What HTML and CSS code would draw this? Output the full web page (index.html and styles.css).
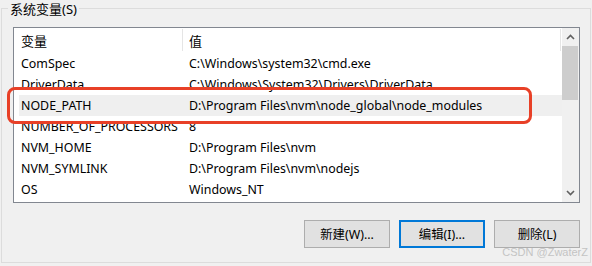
FILE: index.html
```html
<!DOCTYPE html>
<html lang="zh-CN">
<head>
<meta charset="utf-8">
<link rel="stylesheet" href="styles.css">
</head>
<body>
<div class="group">
  <div class="legend">系统变量(S)</div>
  <div class="listbox">
    <div class="list">
      <div class="head">
        <div class="hcell c1">变量</div>
        <div class="hcell c2">值</div>
      </div>
      <div class="row"><div class="cell c1">ComSpec</div><div class="cell c2">C:\Windows\system32\cmd.exe</div></div>
      <div class="row"><div class="cell c1">DriverData</div><div class="cell c2">C:\Windows\System32\Drivers\DriverData</div></div>
      <div class="row sel"><div class="cell c1">NODE_PATH</div><div class="cell c2">D:\Program Files\nvm\node_global\node_modules</div></div>
      <div class="row"><div class="cell c1">NUMBER_OF_PROCESSORS</div><div class="cell c2">8</div></div>
      <div class="row"><div class="cell c1">NVM_HOME</div><div class="cell c2">D:\Program Files\nvm</div></div>
      <div class="row"><div class="cell c1">NVM_SYMLINK</div><div class="cell c2">D:\Program Files\nvm\nodejs</div></div>
      <div class="row"><div class="cell c1">OS</div><div class="cell c2">Windows_NT</div></div>
    </div>
    <div class="scrollbar">
      <div class="arrow">
        <svg width="9" height="6" viewBox="0 0 9 6"><path d="M1 5 L4.5 1.5 L8 5" fill="none" stroke="#606060" stroke-width="1.6"/></svg>
      </div>
      <div class="thumb"></div>
      <div class="track"></div>
      <div class="arrow">
        <svg width="9" height="6" viewBox="0 0 9 6"><path d="M1 1 L4.5 4.5 L8 1" fill="none" stroke="#606060" stroke-width="1.6"/></svg>
      </div>
    </div>
  </div>
  <div class="buttons">
    <button class="btn">新建(W)...</button>
    <button class="btn focus">编辑(I)...</button>
    <button class="btn">删除(L)</button>
  </div>
</div>
<div class="mark"></div>
<div class="watermark">CSDN @ZwaterZ</div>
</body>
</html>
```
FILE: styles.css
```css
html, body {
  margin: 0;
  padding: 0;
  background: #f0f0f0;
  width: 592px;
  height: 266px;
  overflow: hidden;
  font-family: "Noto Sans", "Noto Sans CJK SC", sans-serif;
  font-size: 12.4px;
  color: #000;
}
.group {
  margin: 8px 0 0 1px;
  border: 1px solid #dcdcdc;
  padding: 0 10px 0 11px;
  box-sizing: border-box;
  width: 590px;
  height: 255px;
  display: flex;
  flex-direction: column;
}
.legend {
  align-self: flex-start;
  margin: -9px 0 0 -5px;
  padding: 0 2px;
  height: 18px;
  line-height: 18px;
  font-size: 13px;
  background: #f0f0f0;
}
.listbox {
  margin-top: 9px;
  height: 176px;
  border: 1px solid #828790;
  box-sizing: border-box;
  background: #fff;
  display: flex;
}
.list {
  flex: 1;
  display: flex;
  flex-direction: column;
}
.head {
  display: flex;
  height: 25px;
  align-items: stretch;
}
.hcell {
  display: flex;
  align-items: center;
  border-right: 1px solid #e5e5e5;
  margin: 1px 0 2px;
  box-sizing: border-box;
  font-size: 13px;
}
.c1 { width: 169px; padding-left: 7px; box-sizing: border-box; flex: none; }
.c2 { width: 378px; padding-left: 6px; box-sizing: border-box; flex: none; }
.row {
  display: flex;
  height: 21px;
  line-height: 21px;
  white-space: nowrap;
}
.row.sel {
  background: #efefef;
  margin-left: 5px;
}
.row.sel .c1 { width: 164px; padding-left: 2px; }
.cell { overflow: hidden; }
.scrollbar {
  width: 17px;
  background: #f0f0f0;
  display: flex;
  flex-direction: column;
}
.arrow {
  height: 18px;
  display: flex;
  align-items: center;
  justify-content: center;
}
.thumb {
  height: 54px;
  margin: 0 1px 0 0;
  background: #cdcdcd;
}
.track { flex: 1; }
.buttons {
  margin-top: 17px;
  display: flex;
  justify-content: flex-end;
  gap: 9px;
}
.btn {
  width: 86px;
  height: 28px;
  font: inherit;
  background: #e1e1e1;
  border: 1px solid #adadad;
  color: #000;
  padding: 0;
}
.btn.focus {
  border: 2px solid #0078d7;
}
.mark {
  position: absolute;
  left: 7px;
  top: 87px;
  width: 525px;
  height: 37px;
  box-sizing: border-box;
  border: 3px solid #e84027;
  border-radius: 8px;
}
.watermark {
  position: absolute;
  right: 4px;
  top: 246px;
  font-size: 11px;
  color: #c4c4c4;
  font-family: "Liberation Sans", sans-serif;
}
```
